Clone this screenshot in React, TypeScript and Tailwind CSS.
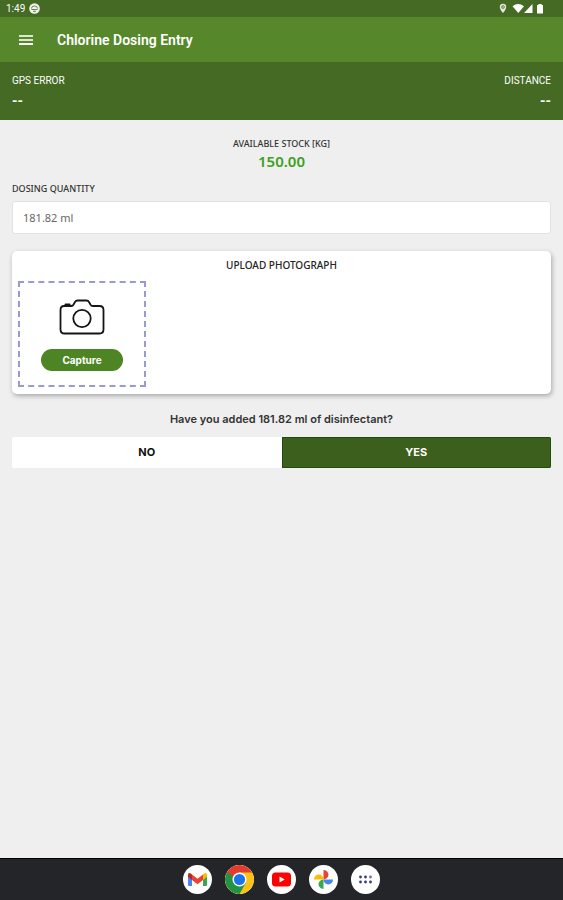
import type { ReactNode } from "react";

function StatusBar() {
  return (
    <div className="flex h-[17px] items-center justify-between bg-[#456a24] pr-[18px] pl-[6px] text-white">
      <div className="flex items-center gap-1">
        <span className="text-[10px] leading-3">1:49</span>
        <svg className="size-[11px]" viewBox="0 0 11 11" aria-hidden="true">
          <circle cx="5.5" cy="5.5" r="5.3" fill="#eef2e9" />
          <path d="M2.500 5.500a3 2.500 0 0 1 6 0M2.500 6.500h6M4 8.300h3" stroke="#66844d" fill="none" />
        </svg>
      </div>
      <svg className="h-[11px] w-[46px]" viewBox="0 0 46 11" fill="#fff" aria-hidden="true">
        <path d="M4 .8a3.200 3.200 0 0 0-3.200 3.200C.8 6.500 4 10 4 10s3.200-3.500 3.200-6A3.200 3.200 0 0 0 4 .8Zm0 1.500a1.700 1.700 0 1 1 0 3.400 1.700 1.700 0 0 1 0-3.400Z" fill="#e3eadb" />
        <circle cx="4" cy="4" r=".8" />
        <path d="M13.500 3.200Q19 -1 25 3.200L19.300 10Z" />
        <path d="M33.500 1v9H25Z" />
        <path d="M38 2h1.500V1h3.200v1H44v8.500h-6Z" />
      </svg>
    </div>
  );
}

function Reading({ label, value, right }: { label: string; value: string; right?: boolean }) {
  return (
    <div className={right ? "text-right" : "text-left"}>
      <div className="text-[10px] leading-4">{label}</div>
      <div className="text-sm leading-6 font-bold">{value}</div>
    </div>
  );
}

function Camera() {
  return (
    <svg className="h-9 w-[46px]" viewBox="0 0 46 36" fill="none" stroke="#151515" strokeWidth="1.8" strokeLinejoin="round" aria-hidden="true">
      <path d="M5 7h7q2 0 2.700-1.700L16 3q.8-1.500 2.500-1.500h9Q29.200 1.500 30 3l1.300 2.300Q32.200 7 34 7h6.500Q44.500 7 44.500 11v19.500q0 4-4 4h-35q-4 0-4-4V11Q1.500 7 5 7Z" />
      <path d="M6.500 6.500V5.500h4v1" strokeWidth="2" />
      <circle cx="23" cy="19.500" r="8.700" />
    </svg>
  );
}

function DockApp({ name, children }: { name: string; children: ReactNode }) {
  return (
    <button type="button" aria-label={name} className="size-[29px] overflow-hidden rounded-full bg-white">
      <svg className="size-full" viewBox="0 0 29 29" aria-hidden="true">
        {children}
      </svg>
    </button>
  );
}

function Dock() {
  return (
    <nav aria-label="Apps" className="flex h-[42px] items-center justify-center gap-[13px] border-t border-black bg-[#242529]">
      <DockApp name="Gmail">
        <path d="M5 9.500v10.500q0 1 1 1h3V12.500Z" fill="#4285f4" />
        <path d="M24 9.500v10.500q0 1-1 1h-3V12.500Z" fill="#34a853" />
        <path d="M20 9.500l1.200-1Q24 7 24 10.200v1.500l-4 3.300Z" fill="#fbbc04" />
        <path d="M9 9.500l-1.200-1Q5 7 5 10.200v1.500L9 15Z" fill="#c5221f" />
        <path d="M9 9.500l5.500 4.200L20 9.500V15l-5.500 4.200L9 15Z" fill="#ea4335" />
      </DockApp>
      <DockApp name="Chrome">
        <circle cx="14.500" cy="14.500" r="14.500" fill="#fbc116" />
        <path d="M14.500 14.500L1.900 7.300A14.500 14.500 0 0 0 14.500 29L20.700 18Z" fill="#229342" />
        <path d="M8.300 18L1.900 7.300A14.500 14.500 0 0 1 27.100 7.500H14.500Z" fill="#e33b2e" />
        <path d="M1.900 7.300L8.300 18.100 14.500 14.500Z" fill="#229342" />
        <circle cx="14.500" cy="14.500" r="7" fill="#fff" />
        <circle cx="14.500" cy="14.500" r="5.600" fill="#1a73e8" />
      </DockApp>
      <DockApp name="YouTube">
        <rect x="5" y="7.500" width="19" height="14" rx="3.500" fill="#f00" />
        <path d="M12.500 11.500v6l5.200-3Z" fill="#fff" />
      </DockApp>
      <DockApp name="Photos">
        <path d="M14.500 14.500V5a5 4.750 0 0 1 0 9.500Z" fill="#ea4335" />
        <path d="M14.500 14.500H24a4.750 5 0 0 1-9.500 0Z" fill="#4285f4" />
        <path d="M14.500 14.500V24a5 4.750 0 0 1 0-9.500Z" fill="#34a853" />
        <path d="M14.500 14.500H5a4.750 5 0 0 1 9.500 0Z" fill="#fbbc04" />
      </DockApp>
      <DockApp name="All apps">
        <g fill="#353a78">
          <circle cx="9.500" cy="12" r="1.400" />
          <circle cx="14.500" cy="12" r="1.400" />
          <circle cx="19.500" cy="12" r="1.400" fill="#776b91" />
          <circle cx="9.500" cy="17" r="1.400" />
          <circle cx="14.500" cy="17" r="1.400" />
          <circle cx="19.500" cy="17" r="1.400" />
        </g>
      </DockApp>
    </nav>
  );
}

export default function App() {
  return (
    <div className="flex min-h-screen flex-col bg-[#efefef] font-['Roboto',sans-serif] text-[#333]">
      <StatusBar />
      <header className="flex h-[45px] items-center gap-6 bg-[#57872b] pr-3 pl-[19px] text-white">
        <button type="button" aria-label="Open menu" className="flex w-[14px] flex-col gap-[2px] py-2">
          <span className="h-[2px] bg-[#dce7d0]" />
          <span className="h-[2px] bg-[#dce7d0]" />
          <span className="h-[2px] bg-white" />
        </button>
        <h1 className="pt-px text-sm leading-5 font-semibold">Chlorine Dosing Entry</h1>
      </header>
      <section className="flex h-[58px] justify-between bg-[#456a24] px-3 pt-[11px] text-white">
        <Reading label="GPS ERROR" value="--" />
        <Reading label="DISTANCE" value="--" right />
      </section>

      <main className="flex grow flex-col px-3 pt-4 font-['Noto_Sans',sans-serif]">
        <div className="text-center">
          <div className="text-[9px] leading-4 font-medium">AVAILABLE STOCK [KG]</div>
          <div className="text-[15px] leading-[18px] font-semibold text-[#3f9f23]">150.00</div>
        </div>
        <label htmlFor="quantity" className="mt-[11px] text-[9px] leading-4 font-medium">
          DOSING QUANTITY
        </label>
        <input
          id="quantity"
          defaultValue="181.82 ml"
          className="mt-1 h-[33px] w-full rounded-[3px] border border-[#e2e2e2] bg-white px-[10px] text-[11px] text-[#666] outline-none"
        />

        <section className="mt-[17px] rounded-[5px] bg-white px-[6px] pt-[6px] pb-[7px] shadow-[1px_2px_5px_rgba(0,0,0,0.3)]">
          <h2 className="text-center text-[10px] leading-4 font-medium text-[#222]">UPLOAD PHOTOGRAPH</h2>
          <div className="mt-2 flex h-[106px] w-32 flex-col items-center border-2 border-dashed border-[#9999d6] pt-4">
            <Camera />
            <button type="button" className="mt-[14px] h-[22px] w-[82px] rounded-full bg-[#4e8524] font-['Inter',sans-serif] text-[10px] leading-4 font-bold text-white">
              Capture
            </button>
          </div>
        </section>

        <p className="mt-4 text-center font-['Inter',sans-serif] text-[11px] leading-[18px] font-semibold">Have you added 181.82 ml of disinfectant?</p>
        <div className="mt-[9px] grid h-[31px] grid-cols-2 overflow-hidden rounded-[2px] font-['Inter',sans-serif] text-[11px] font-bold">
          <button type="button" className="bg-white text-[#111]">NO</button>
          <button type="button" className="border border-[#1f4d0d] bg-[#3d5f1d] text-white">YES</button>
        </div>
      </main>
      <Dock />
    </div>
  );
}
